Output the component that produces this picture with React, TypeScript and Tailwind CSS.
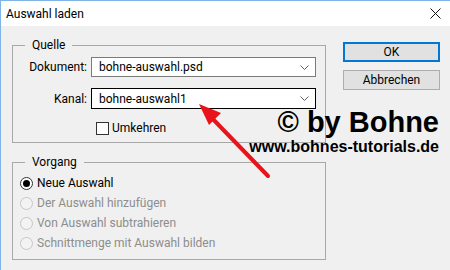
import React from "react";

function Chevron() {
  return (
    <svg width="9" height="5" viewBox="0 0 9 5" className="shrink-0">
      <path d="M0.5 0.5L4.5 4.5L8.5 0.5" fill="none" stroke="#606060" strokeWidth="1" />
    </svg>
  );
}

function Radio({ label, checked, disabled }: { label: string; checked?: boolean; disabled?: boolean }) {
  return (
    <div className="flex h-[20px] items-center gap-[4px]">
      <span
        className={
          checked
            ? "flex h-[13px] w-[13px] items-center justify-center rounded-full border border-[#333333] bg-white"
            : "h-[13px] w-[13px] rounded-full border border-[#c6c6c6] bg-[#f3f3f3]"
        }
      >
        {checked && <span className="h-[7px] w-[7px] rounded-full bg-black" />}
      </span>
      <span className={disabled ? "text-[#8d8d8d]" : "text-black"}>{label}</span>
    </div>
  );
}

export default function App() {
  return (
    <div className="relative h-[270px] w-[450px] overflow-hidden border-l border-t border-[#80b4e6] bg-[#f0f0f0] font-['Roboto',sans-serif] text-[12px] leading-[16px] text-black">
      {/* Title bar */}
      <div className="flex h-[25px] items-center justify-between bg-white pl-[5px] pr-[9px]">
        <span>Auswahl laden</span>
        <svg width="11" height="11" viewBox="0 0 11 11">
          <path d="M0.5 0.5L10.5 10.5M10.5 0.5L0.5 10.5" stroke="#111" strokeWidth="1" />
        </svg>
      </div>

      <div className="flex pl-[11px] pt-[11px]">
        <div className="flex w-[314px] flex-col gap-[11px]">
          {/* Quelle */}
          <fieldset className="h-[106px] border border-[#a8a8a8]">
            <legend className="ml-[12px] px-[7px]">Quelle</legend>
            <div className="grid grid-cols-[74px_225px] items-center gap-x-[4px] gap-y-[11px] pt-[4px]">
              <span className="text-right">Dokument:</span>
              <div className="flex h-[20px] items-center justify-between border border-[#7a7a7a] bg-white pl-[7px] pr-[6px]">
                <span>bohne-auswahl.psd</span>
                <Chevron />
              </div>
              <span className="text-right">Kanal:</span>
              <div className="flex h-[21px] items-center justify-between border border-black bg-white pl-[7px] pr-[6px]">
                <span>bohne-auswahl1</span>
                <Chevron />
              </div>
              <span />
              <div className="flex items-center gap-[3px] pl-[5px]">
                <span className="h-[13px] w-[13px] border border-[#333333] bg-white" />
                <span>Umkehren</span>
              </div>
            </div>
          </fieldset>

          {/* Vorgang */}
          <fieldset className="h-[106px] border border-[#a8a8a8]">
            <legend className="ml-[12px] px-[7px]">Vorgang</legend>
            <div className="flex flex-col pl-[7px] pt-[3px]">
              <Radio label="Neue Auswahl" checked />
              <Radio label="Der Auswahl hinzufügen" disabled />
              <Radio label="Von Auswahl subtrahieren" disabled />
              <Radio label="Schnittmenge mit Auswahl bilden" disabled />
            </div>
          </fieldset>
        </div>

        {/* Buttons */}
        <div className="ml-[17px] flex w-[97px] flex-col gap-[8px] pt-[5px]">
          <button className="h-[20px] border-2 border-[#0078d7] bg-[#e1e1e1] leading-[14px]">OK</button>
          <button className="h-[20px] border border-[#adadad] bg-[#e1e1e1] leading-[16px]">Abbrechen</button>
        </div>
      </div>

      {/* Watermark */}
      <div className="absolute left-[246px] top-[105px] flex w-[192px] flex-col items-end font-['Liberation_Sans',Arial,sans-serif] font-bold text-black">
        <span className="text-[29px] leading-[32px]">© by Bohne</span>
        <span className="text-[16px] leading-[18px]">www.bohnes-tutorials.de</span>
      </div>

      {/* Red arrow */}
      <svg className="pointer-events-none absolute left-0 top-0" width="450" height="270" viewBox="0 0 450 270">
        <path d="M267 175L207 113" stroke="#e8131b" strokeWidth="4" strokeLinecap="round" />
        <path d="M198 103L220 112L208 124Z" fill="#e8131b" />
      </svg>
    </div>
  );
}
